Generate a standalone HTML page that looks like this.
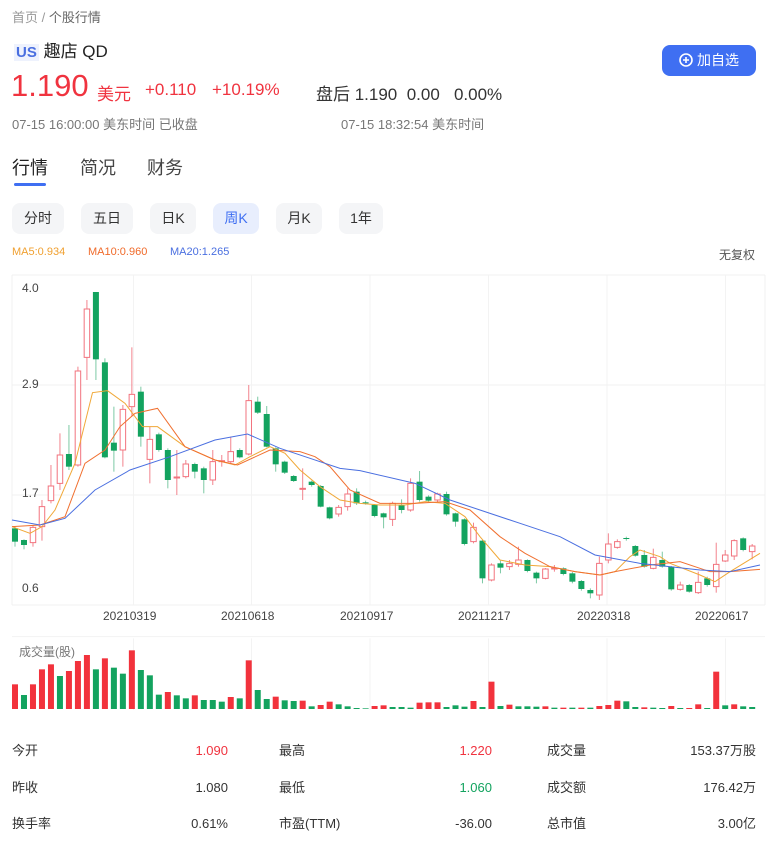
<!DOCTYPE html><html><head><meta charset="utf-8"><style>
*{margin:0;padding:0;box-sizing:border-box}
body{width:774px;height:847px;background:#fff;font-family:"Liberation Sans","Noto Sans CJK SC",sans-serif;color:#333;position:relative;overflow:hidden}
.a{position:absolute;white-space:nowrap}
.red{color:#f0333f}.grn{color:#13a35f}.gray{color:#888}
.tab{position:absolute;top:203px;height:31px;background:#f4f5f7;border-radius:8px;font-size:14px;line-height:31px;text-align:center;color:#333}
.tbl{font-size:13px;line-height:18px;height:18px}
</style></head><body>
<div class="a" style="left:12px;top:7px;font-size:13px;color:#999">首页 / <span style="color:#666">个股行情</span></div>
<div class="a" style="left:14px;top:37px;font-size:17px;color:#222"><span style="color:#4a6fe0;font-weight:bold;font-size:15px;background:#eef2fd;padding:0 2px">US</span> 趣店 QD</div>
<div class="a red" style="left:11px;top:68px;font-size:31px;line-height:36px">1.190</div>
<div class="a red" style="left:97px;top:80px;font-size:17px">美元</div>
<div class="a red" style="left:145px;top:80px;font-size:17px">+0.110</div>
<div class="a red" style="left:212px;top:80px;font-size:17px">+10.19%</div>
<div class="a" style="left:316px;top:80px;font-size:17px;color:#333">盘后 1.190&nbsp;&nbsp;0.00&nbsp;&nbsp;&nbsp;0.00%</div>
<div class="a" style="left:12px;top:114px;font-size:13px;color:#777">07-15 16:00:00 美东时间 已收盘</div>
<div class="a" style="left:341px;top:114px;font-size:13px;color:#777">07-15 18:32:54 美东时间</div>
<div class="a" style="left:662px;top:45px;width:94px;height:31px;background:#3f6ff2;border-radius:8px;color:#fff;font-size:14px;line-height:31px;text-align:center"><svg width="14" height="14" viewBox="0 0 14 14" style="vertical-align:-2px;margin-right:4px"><circle cx="7" cy="7" r="6" fill="none" stroke="#fff" stroke-width="1.6"/><path d="M7 4v6M4 7h6" stroke="#fff" stroke-width="1.6"/></svg>加自选</div>
<div class="a" style="left:12px;top:154px;font-size:18px;color:#222">行情</div>
<div class="a" style="left:80px;top:154px;font-size:18px;color:#444">简况</div>
<div class="a" style="left:147px;top:154px;font-size:18px;color:#444">财务</div>
<div class="a" style="left:14px;top:183px;width:32px;height:3px;background:#3f6ff2;border-radius:2px"></div>
<div class="tab" style="left:12px;width:52px">分时</div>
<div class="tab" style="left:81px;width:52px">五日</div>
<div class="tab" style="left:150px;width:46px">日K</div>
<div class="tab" style="left:213px;width:46px;background:#e8eefd;color:#3f6ff2">周K</div>
<div class="tab" style="left:276px;width:46px">月K</div>
<div class="tab" style="left:339px;width:44px">1年</div>
<div class="a" style="left:12px;top:246px;font-size:11px;color:#f0a030">MA5:0.934</div>
<div class="a" style="left:88px;top:246px;font-size:11px;color:#f06a2a">MA10:0.960</div>
<div class="a" style="left:170px;top:246px;font-size:11px;color:#4a6fe0">MA20:1.265</div>
<div class="a" style="left:719px;top:246px;font-size:12px;color:#555">无复权</div>
<svg id="ch" class="a" style="left:0;top:270px" width="774" height="450" viewBox="0 0 1548 1350" preserveAspectRatio="none"></svg>
<div class="a" style="left:22px;top:281px;font-size:12px;color:#444">4.0</div>
<div class="a" style="left:22px;top:377px;font-size:12px;color:#444">2.9</div>
<div class="a" style="left:22px;top:486px;font-size:12px;color:#444">1.7</div>
<div class="a" style="left:22px;top:581px;font-size:12px;color:#444">0.6</div>
<div class="a" style="left:103px;top:609px;font-size:12px;color:#444">20210319</div>
<div class="a" style="left:221px;top:609px;font-size:12px;color:#444">20210618</div>
<div class="a" style="left:340px;top:609px;font-size:12px;color:#444">20210917</div>
<div class="a" style="left:458px;top:609px;font-size:12px;color:#444">20211217</div>
<div class="a" style="left:577px;top:609px;font-size:12px;color:#444">20220318</div>
<div class="a" style="left:695px;top:609px;font-size:12px;color:#444">20220617</div>
<div class="a" style="left:19px;top:643px;font-size:12px;color:#777">成交量(股)</div>
<div class="a tbl" style="left:12px;top:742px">今开</div><div class="a tbl red" style="right:546px;top:742px">1.090</div>
<div class="a tbl" style="left:279px;top:742px">最高</div><div class="a tbl red" style="right:282px;top:742px">1.220</div>
<div class="a tbl" style="left:547px;top:742px">成交量</div><div class="a tbl" style="right:18px;top:742px">153.37万股</div>
<div class="a tbl" style="left:12px;top:779px">昨收</div><div class="a tbl" style="right:546px;top:779px">1.080</div>
<div class="a tbl" style="left:279px;top:779px">最低</div><div class="a tbl grn" style="right:282px;top:779px">1.060</div>
<div class="a tbl" style="left:547px;top:779px">成交额</div><div class="a tbl" style="right:18px;top:779px">176.42万</div>
<div class="a tbl" style="left:12px;top:815px">换手率</div><div class="a tbl" style="right:546px;top:815px">0.61%</div>
<div class="a tbl" style="left:279px;top:815px">市盈(TTM)</div><div class="a tbl" style="right:282px;top:815px">-36.00</div>
<div class="a tbl" style="left:547px;top:815px">总市值</div><div class="a tbl" style="right:18px;top:815px">3.00亿</div>
<script>
var s='';var ST=17.98;
function L(x1,y1,x2,y2,c){s+='<line x1="'+x1+'" y1="'+y1+'" x2="'+x2+'" y2="'+y2+'" stroke="'+c+'" stroke-width="1" vector-effect="non-scaling-stroke"/>';}
[15,345,675,1005].forEach(function(y){L(24,y,1530,y,'#f0f0f0')});
[267,503,740,977,1214,1451].forEach(function(x){L(x,15,x,1005,'#f3f3f3');L(x,1105,x,1320,'#f3f3f3')});
L(24,15,24,1005,'#f0f0f0');L(1530,15,1530,1005,'#f0f0f0');
L(24,1100,1530,1100,'#f3f3f3');
var C=[['g',775,815,770,830],['g',810,825,808,838],['r',772,818,765,830],['r',710,770,690,812],['r',648,692,585,700],['r',555,640,490,660],['g',552,590,465,600],['r',303,585,290,590],['r',117,262,90,330],['g',66,268,66,330],['g',277,562,265,565],['g',518,542,410,605],['r',418,540,405,590],['r',373,410,232,440],['g',365,500,350,530],['r',508,568,470,640],['g',493,540,488,545],['g',540,630,535,655],['r',621,624,540,675],['r',582,620,570,625],['g',582,605,578,625],['g',595,630,590,670],['r',575,630,540,645],['r',572,575,555,590],['r',545,575,500,582],['g',540,562,535,565],['r',392,552,345,556],['g',395,428,380,432],['g',432,530,408,532],['g',535,583,532,605],['g',575,608,572,612],['g',618,633,615,636],['r',655,658,595,690],['g',635,645,632,650],['g',648,710,645,712],['g',712,745,710,748],['r',712,732,705,740],['r',672,710,655,722],['g',665,700,655,705],['g',697,700,692,704],['g',705,738,702,742],['g',730,742,728,775],['r',700,748,695,768],['g',705,720,688,730],['r',640,720,625,725],['g',635,690,603,695],['g',680,692,676,696],['r',672,690,668,698],['g',672,733,665,737],['g',730,755,728,770],['g',748,822,745,826],['r',772,815,758,820],['g',812,925,810,940],['r',885,930,880,934],['g',880,893,872,910],['r',880,890,870,900],['r',870,883,830,890],['g',870,903,868,907],['g',908,925,905,940],['r',897,925,894,928],['r',894,897,885,905],['g',895,912,892,916],['g',910,935,906,940],['g',933,957,930,962],['g',960,970,955,985],['r',880,975,860,990],['r',822,870,790,880],['r',815,832,808,836],['g',804,807,800,812],['g',828,857,825,860],['g',855,890,840,893],['r',862,895,836,898],['g',870,890,845,893],['g',890,958,888,962],['r',945,958,935,962],['g',945,965,942,968],['r',937,968,905,972],['g',925,945,920,950],['r',883,950,818,968],['r',855,873,840,876],['r',812,858,808,870],['g',805,840,802,844],['r',828,845,822,868]];
C.forEach(function(c,i){var x=30+i*ST;var red=c[0]=='r';
L(x,c[3],x,c[4],red?'#f2838d':'#7cc9a4');
if(red)s+='<rect x="'+(x-5.5)+'" y="'+c[1]+'" width="11" height="'+Math.max(3,c[2]-c[1])+'" fill="#fff" stroke="#f2737e" stroke-width="1" vector-effect="non-scaling-stroke"/>';
else s+='<rect x="'+(x-6)+'" y="'+c[1]+'" width="12" height="'+Math.max(3,c[2]-c[1])+'" fill="#13a35f"/>';});
function P(pts,c){s+='<polyline fill="none" stroke="'+c+'" stroke-width="1" vector-effect="non-scaling-stroke" points="'+pts+'"/>';}
P('24,770 60,790 84,770 110,720 150,580 185,368 215,362 250,400 285,470 315,470 370,530 430,570 470,585 500,560 540,530 570,550 600,600 640,650 680,690 720,700 760,705 810,705 850,695 890,700 930,740 960,800 1000,870 1050,885 1100,890 1150,905 1200,915 1230,905 1260,860 1280,840 1320,860 1340,880 1400,915 1430,935 1460,905 1520,850','#f0a838');
P('24,770 80,765 130,740 170,580 210,540 240,470 270,430 315,415 370,530 430,570 475,585 540,540 600,545 630,560 660,590 700,660 760,700 830,700 890,695 940,720 1000,800 1050,850 1100,890 1150,905 1200,915 1230,905 1300,885 1360,875 1420,905 1460,905 1520,898','#f07030');
P('24,750 80,765 130,745 190,660 260,600 340,560 430,510 495,492 560,535 620,565 680,595 720,602 830,640 900,690 960,720 1040,760 1120,800 1190,855 1280,880 1400,900 1460,905 1520,885','#4a6fe0');
var V=['r1243','g1275','r1243','r1198','r1183','g1218','r1203','r1173','r1155','g1198','r1165','g1193','g1211','r1141','g1200','g1216','g1274','r1266','g1276','g1285','r1276','g1290','g1290','g1295','r1281','g1285','r1171','g1260','g1287','r1280','g1291','g1293','r1292','g1309','r1305','r1295','g1303','g1309','g1314','g1315','r1308','r1306','g1311','g1311','g1313','r1298','r1297','r1297','g1311','g1306','g1310','r1293','g1311','r1235','g1308','r1304','g1309','g1309','g1310','r1309','g1313','r1313','g1313','r1313','g1313','r1308','r1305','r1292','g1294','g1311','r1312','g1313','g1314','r1308','g1314','r1314','r1303','g1314','r1205','g1306','r1303','g1309','g1311'];
V.forEach(function(v,i){var x=30+i*ST;var y=+v.slice(1);s+='<rect x="'+(x-6)+'" y="'+y+'" width="12" height="'+(1317-y)+'" fill="'+(v[0]=='r'?'#f2323c':'#13a35f')+'"/>';});
document.getElementById('ch').innerHTML=s;
</script>
</body></html>
